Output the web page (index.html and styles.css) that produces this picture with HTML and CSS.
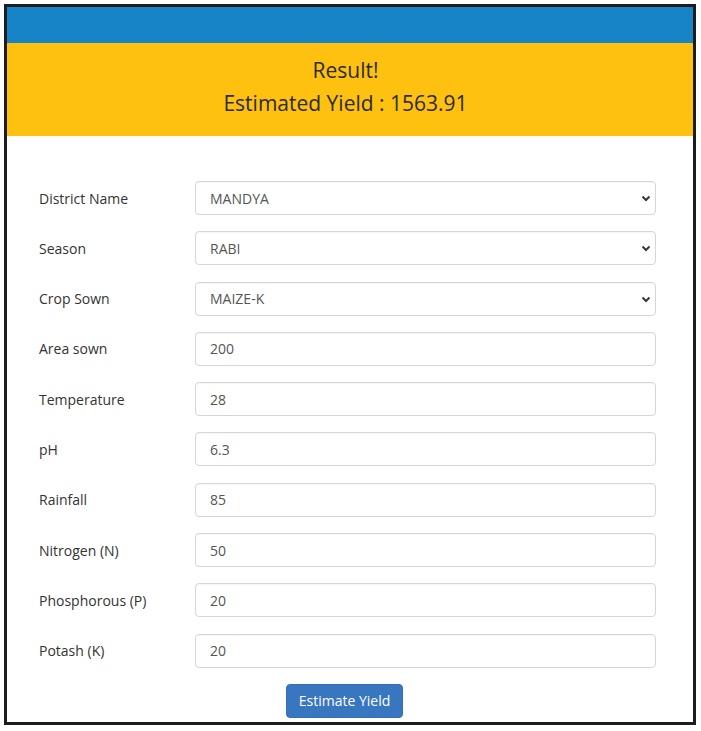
FILE: index.html
```html
<!DOCTYPE html>
<html lang="en">
<head>
  <meta charset="UTF-8">
  <title>Crop Yield Estimator</title>
  <link rel="stylesheet" href="styles.css">
</head>
<body>

  <div class="frame">
    <div class="topbar"></div>

    <!-- Result banner -->
    <div class="result">
      <p>Result!</p>
      <p>Estimated Yield : 1563.91</p>
    </div>

    <form class="yield-form" id="yieldForm">
      <label for="district">District Name</label>
      <div class="select-wrap">
        <select id="district">
          <option>MANDYA</option>
        </select>
        <svg class="chevron" width="10" height="7" viewBox="0 0 10 7"><path d="M1.5 1.5 L5 5 L8.5 1.5" fill="none" stroke="#343a40" stroke-width="2"/></svg>
      </div>

      <label for="season">Season</label>
      <div class="select-wrap">
        <select id="season">
          <option>RABI</option>
        </select>
        <svg class="chevron" width="10" height="7" viewBox="0 0 10 7"><path d="M1.5 1.5 L5 5 L8.5 1.5" fill="none" stroke="#343a40" stroke-width="2"/></svg>
      </div>

      <label for="crop">Crop Sown</label>
      <div class="select-wrap">
        <select id="crop">
          <option>MAIZE-K</option>
        </select>
        <svg class="chevron" width="10" height="7" viewBox="0 0 10 7"><path d="M1.5 1.5 L5 5 L8.5 1.5" fill="none" stroke="#343a40" stroke-width="2"/></svg>
      </div>

      <label for="area">Area sown</label>
      <input type="text" id="area" value="200">

      <label for="temp">Temperature</label>
      <input type="text" id="temp" value="28">

      <label for="ph">pH</label>
      <input type="text" id="ph" value="6.3">

      <label for="rain">Rainfall</label>
      <input type="text" id="rain" value="85">

      <label for="nitrogen">Nitrogen (N)</label>
      <input type="text" id="nitrogen" value="50">

      <label for="phos">Phosphorous (P)</label>
      <input type="text" id="phos" value="20">

      <label for="potash">Potash (K)</label>
      <input type="text" id="potash" value="20">

      <div class="actions">
        <button type="submit">Estimate Yield</button>
      </div>
    </form>
  </div>

</body>
</html>
```

FILE: styles.css
```css
* {
  box-sizing: border-box;
  font-family: "Open Sans", Arial, sans-serif;
}

body {
  margin: 0;
  background-color: #fff;
  color: #333;
}

.frame {
  width: 692px;
  margin: 4px;
  border: 3px solid #1d1d1d;
  background: #fff;
}

.topbar {
  height: 36px;
  background-color: #1784c7;
}

.result {
  background-color: #fec110;
  padding: 11px 9px 16px 0;
  text-align: center;
}

.result p {
  margin: 0;
  font-size: 21px;
  line-height: 33px;
  color: #2b2b2b;
}

.yield-form {
  display: grid;
  grid-template-columns: 156px 1fr;
  row-gap: 16.3px;
  align-items: center;
  padding: 45px 37px 4px 32px;
}

.yield-form label {
  font-size: 14px;
  color: #333;
}

.yield-form input,
.yield-form select {
  width: 100%;
  height: 34px;
  padding: 0 14px;
  font-size: 14px;
  color: #555;
  background: #fff;
  border: 1px solid #d6d6d6;
  border-radius: 4px;
  box-shadow: inset 0 1px 1px rgba(0,0,0,0.04);
  outline: none;
}

.yield-form select {
  -webkit-appearance: none;
  appearance: none;
}

.select-wrap {
  position: relative;
}

.chevron {
  position: absolute;
  right: 5px;
  top: 14px;
  pointer-events: none;
}

.actions {
  grid-column: 1 / -1;
  display: flex;
  justify-content: center;
  padding-right: 6px;
}

button {
  height: 34px;
  padding: 0 12px;
  font-size: 14px;
  color: #fff;
  background-color: #3876c0;
  border: 1px solid #3470b8;
  border-radius: 4px;
  cursor: pointer;
}
```
